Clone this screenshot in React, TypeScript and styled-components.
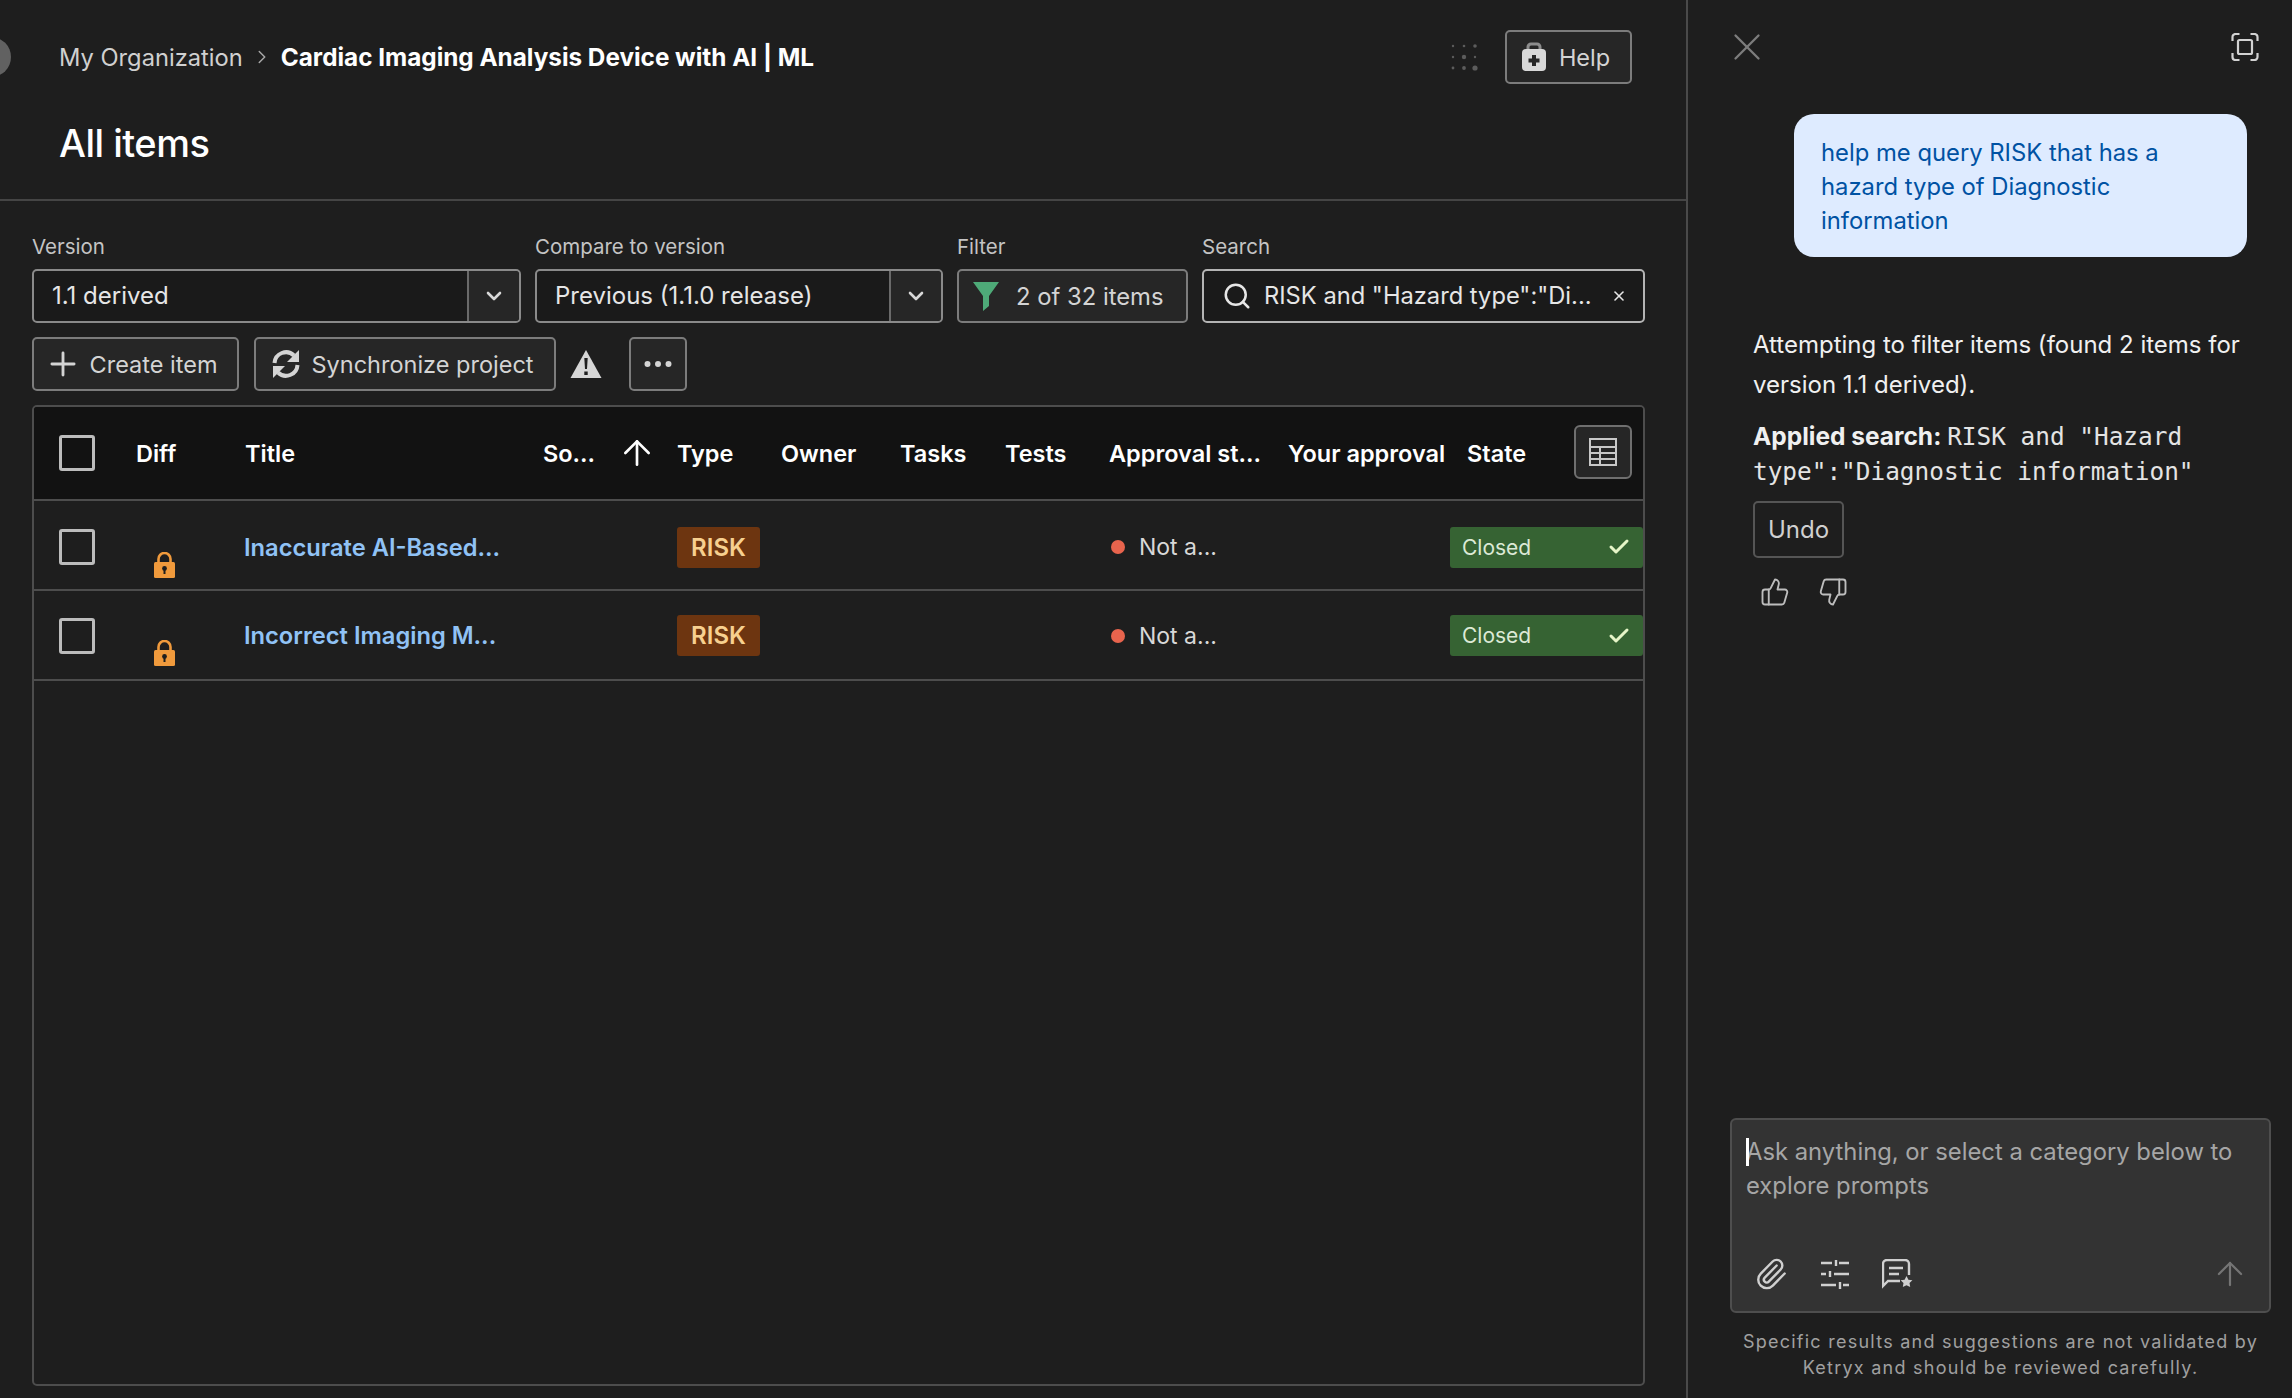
import React from 'react'
import styled, { createGlobalStyle } from 'styled-components'
import { ArrowUp, Check, ChevronDown, ChevronRight, MoreHorizontal, Paperclip, Plus, Search, ThumbsDown, ThumbsUp, X } from 'lucide-react'

const GlobalStyle = createGlobalStyle`
    html, body {
        margin: 0;
        padding: 0;
        height: 100%;
        background: #1e1e1e;
        overflow: hidden;
    }
    * {
        box-sizing: border-box;
    }
    #root {
        height: 100%;
    }
`

const Page = styled.div`
    display: flex;
    width: 2292px;
    height: 1398px;
    background: #1e1e1e;
    color: #e8e8e8;
    font-family: Inter, "Noto Sans", sans-serif;
    font-size: 24px;
    overflow: hidden;
    position: relative;
`

const Main = styled.main`
    width: 1688px;
    flex: none;
    display: flex;
    flex-direction: column;
    border-right: 2px solid #4a4a4a;
`

const Avatar = styled.div`
    position: absolute;
    left: -29px;
    top: 37px;
    width: 40px;
    height: 40px;
    border-radius: 50%;
    background: #616161;
`

const Header = styled.header`
    height: 201px;
    flex: none;
    border-bottom: 2px solid #454545;
    padding: 30px 54px 0 59px;
`

const TopRow = styled.div`
    display: flex;
    align-items: center;
    height: 54px;
`

const Crumb = styled.span`
    font-size: 23.7px;
    color: #d0d0d0;
`

const CrumbCurrent = styled.span`
    font-size: 24.3px;
    font-weight: 700;
    color: #fff;
`

const CrumbSep = styled.span`
    display: flex;
    margin: 0 8px;
    color: #a8a8a8;
`

const Spacer = styled.div`
    flex: 1;
`

const DotGrid = styled.svg`
    width: 30px;
    height: 30px;
    margin-right: 26px;
`

const PageTitle = styled.h1`
    margin: 32px 0 0;
    font-size: 38px;
    line-height: 54px;
    font-weight: 500;
    color: #fff;
    letter-spacing: -0.5px;
`

const Controls = styled.section`
    padding: 33px 41px 0 32px;
    display: flex;
    flex-direction: column;
    flex: 1;
    min-height: 0;
`

const FieldRow = styled.div`
    display: flex;
    gap: 14px;
`

const Field = styled.div<{ $width: number }>`
    width: ${p => p.$width}px;
    flex: none;
`

const Label = styled.label`
    display: block;
    font-size: 20.5px;
    line-height: 26px;
    color: #c4c4c4;
    margin-bottom: 9px;
`

const Select = styled.div`
    display: flex;
    height: 54px;
    border: 2px solid #8a8a8a;
    border-radius: 5px;
    background: #1a1a1a;
`

const SelectValue = styled.div`
    flex: 1;
    padding: 0 0 2px 18px;
    display: flex;
    align-items: center;
    font-size: 24px;
    color: #e6e6e6;
`

const SelectArrow = styled.div`
    width: 52px;
    border-left: 2px solid #6a6a6a;
    background: #262626;
    border-radius: 0 4px 4px 0;
    display: flex;
    align-items: center;
    justify-content: center;
    color: #d8d8d8;
`

const FilterBox = styled.div`
    height: 54px;
    border: 2px solid #7c7c7c;
    border-radius: 5px;
    background: #262626;
    display: flex;
    align-items: center;
    padding-left: 13px;
    gap: 16px;
    font-size: 23.8px;
    color: #d4d4d4;
    white-space: nowrap;
`

const SearchBox = styled.div`
    height: 54px;
    border: 2px solid #b4b4b4;
    border-radius: 5px;
    background: #1a1a1a;
    display: flex;
    align-items: center;
    padding: 0 16px 0 18px;
    gap: 12px;
    font-size: 23.7px;
    color: #e6e6e6;
`

const SearchText = styled.span`
    flex: 1;
    padding-bottom: 2px;
    white-space: nowrap;
    overflow: hidden;
`

const ActionRow = styled.div`
    display: flex;
    align-items: center;
    height: 54px;
    margin-top: 14px;
`

const ActionButton = styled.button<{ $width: number; $gap?: number; $shift?: number }>`
    width: ${p => p.$width}px;
    height: 54px;
    flex: none;
    border: 2px solid #7c7c7c;
    border-radius: 5px;
    background: #262626;
    color: #d4d4d4;
    font: inherit;
    font-size: 23.5px;
    display: flex;
    align-items: center;
    justify-content: center;
    gap: ${p => p.$gap ?? 12}px;
    padding: 0 ${p => p.$shift ?? 0}px 0 0;
`

const SyncButton = styled(ActionButton)`
    margin-left: 15px;
`

const WarningIcon = styled.svg`
    width: 32px;
    height: 30px;
    margin: 0 27px 0 14px;
`

const Table = styled.div`
    margin-top: 14px;
    flex: 1;
    min-height: 0;
    margin-bottom: 12px;
    border: 2px solid #4d4d4d;
    border-radius: 5px;
    overflow: hidden;
`

const columns = '77px 109px 298px 134px 104px 119px 105px 104px 179px 179px 1fr'

const HeadRow = styled.div`
    display: grid;
    grid-template-columns: ${columns};
    align-items: center;
    height: 94px;
    padding-left: 25px;
    background: #121212;
    border-bottom: 2px solid #4d4d4d;
    font-size: 23.5px;
    font-weight: 600;
    color: #fff;
    position: relative;
`

const BodyRow = styled.div`
    display: grid;
    grid-template-columns: ${columns};
    align-items: center;
    height: 90px;
    padding: 1px 0 0 25px;
    border-bottom: 2px solid #4d4d4d;

    ${HeadRow} + & {
        padding-top: 4px;
    }
`

const Checkbox = styled.span`
    display: block;
    width: 36px;
    height: 36px;
    border: 3px solid #bcbcbc;
    border-radius: 3px;
`

const HeadCell = styled.div`
    white-space: nowrap;
    display: flex;
    align-items: center;
`

const SortCell = styled(HeadCell)`
    gap: 22px;
`

const ColumnButton = styled.button`
    position: absolute;
    right: 11px;
    top: 18px;
    width: 58px;
    height: 54px;
    border: 2px solid #6f6f6f;
    border-radius: 6px;
    background: #262626;
    display: flex;
    align-items: center;
    justify-content: center;
    padding: 0;
`

const LockCell = styled.div`
    padding: 35px 0 0 18px;
    display: flex;
`

const ItemTitle = styled.a`
    font-size: 23.7px;
    font-weight: 600;
    color: #90c2f5;
    white-space: nowrap;
    margin-left: -1px;
`

const TypeTag = styled.span`
    display: inline-flex;
    align-items: center;
    justify-content: center;
    width: 83px;
    height: 41px;
    border-radius: 3px;
    background: #6d3510;
    color: #f7d08f;
    font-size: 24px;
    font-weight: 600;
`

const Approval = styled.div`
    display: flex;
    align-items: center;
    gap: 14px;
    padding-left: 2px;
    font-size: 23px;
    color: #d8d8d8;
`

const Dot = styled.span`
    width: 14px;
    height: 14px;
    border-radius: 50%;
    background: #e8644d;
`

const StateTag = styled.div`
    grid-column: 11;
    margin-left: -17px;
    width: 193px;
    height: 41px;
    border-radius: 3px;
    background: #366333;
    color: #dce9d6;
    font-size: 21px;
    display: flex;
    align-items: center;
    justify-content: space-between;
    padding: 0 12px 0 12px;
`

const Side = styled.aside`
    flex: 1;
    min-width: 0;
    display: flex;
    flex-direction: column;
    padding: 32px 22px 0 65px;
`

const SideTop = styled.div`
    display: flex;
    justify-content: space-between;
    align-items: center;
    height: 30px;
    margin-left: -29px;
    padding-right: 11px;
`

const CloseButton = styled.span`
    display: flex;
    color: #7d7d7d;
`

const Bubble = styled.div`
    align-self: flex-end;
    margin: 52px 23px 0 0;
    width: 453px;
    height: 143px;
    border-radius: 20px;
    background: #deebff;
    color: #0052a3;
    font-size: 23.8px;
    line-height: 34px;
    padding: 22px 27px 0;
`

const Reply = styled.p`
    margin: 68px 0 0;
    font-size: 24px;
    line-height: 40px;
    color: #f0f0f0;
`

const AppliedLine = styled.p`
    margin: 14px 0 0;
    font-size: 24.5px;
    line-height: 34px;
    color: #f0f0f0;
`

const Strong = styled.strong`
    font-weight: 700;
`

const Code = styled.code`
    font-family: "DejaVu Sans Mono", monospace;
    font-size: 24.4px;
    color: #e4e4e4;
`

const UndoButton = styled.button`
    display: block;
    margin-top: 12px;
    width: 91px;
    height: 57px;
    border: 2px solid #555;
    border-radius: 5px;
    background: transparent;
    color: #d0d0d0;
    font: inherit;
    font-size: 24px;
    padding: 0;
`

const Feedback = styled.div`
    display: flex;
    gap: 28px;
    margin: 19px 0 0 7px;
    color: #bdbdbd;
`

const Composer = styled.div`
    margin-top: auto;
    margin-left: -23px;
    width: 541px;
    height: 195px;
    flex: none;
    border: 2px solid #4e4e4e;
    border-radius: 6px;
    background: #333;
    padding: 15px 14px 0;
    position: relative;
    display: flex;
    flex-direction: column;
`

const Placeholder = styled.div`
    font-size: 23.8px;
    line-height: 34px;
    color: #a6a6a6;
    height: 124px;
`

const Caret = styled.span`
    position: absolute;
    left: 14px;
    top: 18px;
    width: 3px;
    height: 28px;
    background: #fff;
`

const ComposerTools = styled.div`
    display: flex;
    align-items: center;
    gap: 33px;
    height: 30px;
    padding-left: 8px;
    color: #d0d0d0;
`

const SendButton = styled.span`
    margin-left: auto;
    margin-right: 6px;
    display: flex;
    color: #757575;
`

const Disclaimer = styled.p`
    margin: 16px 0 17px -23px;
    width: 541px;
    text-align: center;
    font-size: 18px;
    line-height: 26px;
    letter-spacing: 1.25px;
    color: #a0a0a0;
`

const HelpIcon = () => (
    <svg width="26" height="30" viewBox="0 0 26 30">
        <path d="M7 8V5a3 3 0 0 1 3-3h6a3 3 0 0 1 3 3v3" fill="none" stroke="#8c8c8c" strokeWidth="3" />
        <rect x="1" y="7" width="24" height="22" rx="4" fill="#d8d8d8" />
        <path d="M11 13h4v3.500h3.500v4H15V24h-4v-3.500H7.500v-4H11z" fill="#262626" />
    </svg>
)

const SyncIcon = () => (
    <svg width="30" height="30" viewBox="0 0 30 30" fill="none">
        <path d="M3.500 14A11.500 11.500 0 0 1 23 6.500" stroke="#d4d4d4" strokeWidth="4" />
        <path d="M26.500 16A11.500 11.500 0 0 1 7 23.500" stroke="#d4d4d4" strokeWidth="4" />
        <path d="M28 1v12H16z" fill="#d4d4d4" />
        <path d="M2 29V17h12z" fill="#d4d4d4" />
    </svg>
)

const FunnelIcon = () => (
    <svg width="28" height="30" viewBox="0 0 28 30">
        <path d="M1 1h26L17 15v10l-6 5V15z" fill="#4eaa78" />
    </svg>
)

const LockIcon = () => (
    <svg width="21" height="26" viewBox="0 0 21 26">
        <path d="M4.500 11V7a6 6 0 0 1 12 0v4" fill="none" stroke="#f09a3c" strokeWidth="2.600" />
        <rect x="0" y="10" width="21" height="16" rx="1.500" fill="#f09a3c" />
        <circle cx="10.500" cy="16.500" r="2.400" fill="#1e1e1e" />
        <rect x="9.500" y="17" width="2" height="5" fill="#1e1e1e" />
    </svg>
)

const ColumnsIcon = () => (
    <svg width="28" height="28" viewBox="0 0 28 28" fill="none" stroke="#c8c8c8" strokeWidth="2">
        <rect x="1" y="1" width="26" height="26" />
        <path d="M1 9h26M1 15h26M1 21h26M11 9v18" />
    </svg>
)

const ExpandIcon = () => (
    <svg width="28" height="28" viewBox="0 0 28 28" fill="none" stroke="#d2d2d2" strokeWidth="2.200">
        <path d="M1.500 8V4a3 3 0 0 1 3-3h4M19.500 1h4a3 3 0 0 1 3 3v4M26.500 20v4a3 3 0 0 1-3 3h-4M8.500 27h-4a3 3 0 0 1-3-3v-4" />
        <rect x="7" y="7" width="14" height="14" rx="1.500" />
    </svg>
)

const SlidersIcon = () => (
    <svg width="28" height="30" viewBox="0 0 28 30" fill="none" stroke="#d0d0d0" strokeWidth="2.400">
        <path d="M0 4h11M18 4h10M15 1v6M0 15h5M13 15h15M9 12v6M0 26h15M22 26h6M19 23v7" />
    </svg>
)

const PromptIcon = () => (
    <svg width="31" height="30" viewBox="0 0 31 30" fill="none" stroke="#d0d0d0" strokeWidth="2.400">
        <path d="M18 22H6l-5 5V5a4 4 0 0 1 4-4h18a4 4 0 0 1 4 4v11" />
        <path d="M7 9h14M7 15h10" />
        <path d="m24.500 17 1.900 3.700 4 .6-2.900 2.800.7 4-3.700-1.900-3.700 1.900.7-4-2.900-2.800 4-.6z" fill="#d0d0d0" stroke="none" />
    </svg>
)

const dots: [number, number, number][] = [
    [4, 4, 1.2], [15, 4, 1.3], [26, 4, 1.8],
    [4, 15, 1.2], [15, 15, 2.2], [26, 15, 1.2],
    [4, 26, 1.4], [15, 26, 1.9], [26, 26, 2.6],
]

const rows = ['Inaccurate AI-Based...', 'Incorrect Imaging M...']

const App = () => {
    return (
        <Page>
            <GlobalStyle />
            <Avatar />
            <Main>
                <Header>
                    <TopRow>
                        <Crumb>My Organization</Crumb>
                        <CrumbSep><ChevronRight size={22} strokeWidth={1.6} /></CrumbSep>
                        <CrumbCurrent>Cardiac Imaging Analysis Device with AI | ML</CrumbCurrent>
                        <Spacer />
                        <DotGrid viewBox="0 0 30 30">
                            {dots.map(([x, y, r]) => <circle key={`${x}-${y}`} cx={x} cy={y} r={r} fill="#5c5c5c" />)}
                        </DotGrid>
                        <ActionButton $width={127} $shift={6}><HelpIcon />Help</ActionButton>
                    </TopRow>
                    <PageTitle>All items</PageTitle>
                </Header>
                <Controls>
                    <FieldRow>
                        <Field $width={489}>
                            <Label>Version</Label>
                            <Select>
                                <SelectValue>1.1 derived</SelectValue>
                                <SelectArrow><ChevronDown size={24} strokeWidth={2.6} /></SelectArrow>
                            </Select>
                        </Field>
                        <Field $width={408}>
                            <Label>Compare to version</Label>
                            <Select>
                                <SelectValue>Previous (1.1.0 release)</SelectValue>
                                <SelectArrow><ChevronDown size={24} strokeWidth={2.6} /></SelectArrow>
                            </Select>
                        </Field>
                        <Field $width={231}>
                            <Label>Filter</Label>
                            <FilterBox><FunnelIcon />2 of 32 items</FilterBox>
                        </Field>
                        <Field $width={443}>
                            <Label>Search</Label>
                            <SearchBox>
                                <Search size={30} strokeWidth={2} />
                                <SearchText>RISK and "Hazard type":"Di...</SearchText>
                                <X size={16} strokeWidth={2.4} />
                            </SearchBox>
                        </Field>
                    </FieldRow>
                    <ActionRow>
                        <ActionButton $width={207} $gap={8} $shift={10}><Plus size={38} strokeWidth={1.8} />Create item</ActionButton>
                        <SyncButton $width={302} $gap={11} $shift={6}><SyncIcon />Synchronize project</SyncButton>
                        <WarningIcon viewBox="0 0 32 30">
                            <path d="M16 1 31.500 29H.500z" fill="#d6d6d6" />
                            <path d="M14.300 9h3.400l-.7 11h-2zM14.300 22.500h3.400v3.500h-3.400z" fill="#1e1e1e" />
                        </WarningIcon>
                        <ActionButton $width={58}><MoreHorizontal size={36} strokeWidth={2} /></ActionButton>
                    </ActionRow>
                    <Table>
                        <HeadRow>
                            <Checkbox />
                            <HeadCell>Diff</HeadCell>
                            <HeadCell>Title</HeadCell>
                            <SortCell>So...<ArrowUp size={40} strokeWidth={1.6} /></SortCell>
                            <HeadCell>Type</HeadCell>
                            <HeadCell>Owner</HeadCell>
                            <HeadCell>Tasks</HeadCell>
                            <HeadCell>Tests</HeadCell>
                            <HeadCell>Approval st...</HeadCell>
                            <HeadCell>Your approval</HeadCell>
                            <HeadCell>State</HeadCell>
                            <ColumnButton><ColumnsIcon /></ColumnButton>
                        </HeadRow>
                        {rows.map(title => (
                            <BodyRow key={title}>
                                <Checkbox />
                                <LockCell><LockIcon /></LockCell>
                                <ItemTitle>{title}</ItemTitle>
                                <span />
                                <div><TypeTag>RISK</TypeTag></div>
                                <span />
                                <span />
                                <span />
                                <Approval><Dot />Not a...</Approval>
                                <span />
                                <StateTag>Closed<Check size={24} strokeWidth={3} color="#e6f5c8" /></StateTag>
                            </BodyRow>
                        ))}
                    </Table>
                </Controls>
            </Main>
            <Side>
                <SideTop>
                    <CloseButton><X size={46} strokeWidth={1.2} /></CloseButton>
                    <ExpandIcon />
                </SideTop>
                <Bubble>help me query RISK that has a hazard type of Diagnostic information</Bubble>
                <Reply>Attempting to filter items (found 2 items for version 1.1 derived).</Reply>
                <AppliedLine>
                    <Strong>Applied search: </Strong>
                    <Code>RISK and "Hazard type":"Diagnostic information"</Code>
                </AppliedLine>
                <UndoButton>Undo</UndoButton>
                <Feedback>
                    <ThumbsUp size={30} strokeWidth={1.5} />
                    <ThumbsDown size={30} strokeWidth={1.5} />
                </Feedback>
                <Composer>
                    <Caret />
                    <Placeholder>Ask anything, or select a category below to explore prompts</Placeholder>
                    <ComposerTools>
                        <Paperclip size={34} strokeWidth={1.7} />
                        <SlidersIcon />
                        <PromptIcon />
                        <SendButton><ArrowUp size={38} strokeWidth={1.4} /></SendButton>
                    </ComposerTools>
                </Composer>
                <Disclaimer>Specific results and suggestions are not validated by Ketryx and should be reviewed carefully.</Disclaimer>
            </Side>
        </Page>
    )
}

export default App
